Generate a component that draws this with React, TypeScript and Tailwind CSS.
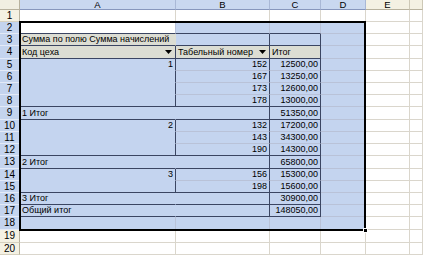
import React from "react";

type Cell = { t?: string; right?: boolean; arrow?: boolean };

// pivot table contents, columns A..C, by sheet row
const pivot: Record<number, Cell[]> = {
  3: [{ t: "Сумма по полю Сумма начислений" }, {}, {}],
  4: [{ t: "Код цеха", arrow: true }, { t: "Табельный номер", arrow: true }, { t: "Итог" }],
  5: [{ t: "1", right: true }, { t: "152", right: true }, { t: "12500,00", right: true }],
  6: [{}, { t: "167", right: true }, { t: "13250,00", right: true }],
  7: [{}, { t: "173", right: true }, { t: "12600,00", right: true }],
  8: [{}, { t: "178", right: true }, { t: "13000,00", right: true }],
  9: [{ t: "1 Итог" }, {}, { t: "51350,00", right: true }],
  10: [{ t: "2", right: true }, { t: "132", right: true }, { t: "17200,00", right: true }],
  11: [{}, { t: "143", right: true }, { t: "34300,00", right: true }],
  12: [{}, { t: "190", right: true }, { t: "14300,00", right: true }],
  13: [{ t: "2 Итог" }, {}, { t: "65800,00", right: true }],
  14: [{ t: "3", right: true }, { t: "156", right: true }, { t: "15300,00", right: true }],
  15: [{}, { t: "198", right: true }, { t: "15600,00", right: true }],
  16: [{ t: "3 Итог" }, {}, { t: "30900,00", right: true }],
  17: [{ t: "Общий итог" }, {}, { t: "148050,00", right: true }],
};

const darkRows = [2, 3, 4, 8, 9, 12, 13, 15, 16, 17];
const groupInner = [5, 6, 7, 10, 11, 14];
const aLine = [4, 5, 6, 7, 8, 10, 11, 12, 14, 15];
const aSpan = [3, 9, 13, 16, 17];

const isSel = (r: number, c: number) => r >= 2 && r <= 18 && c <= 4;

function cellBg(r: number, c: number) {
  if (!isSel(r, c)) return "bg-white";
  if (r === 2 && c === 1) return "bg-white";
  if ((r === 3 && c === 1) || (r === 4 && c <= 3)) return "bg-[#dcddd3]";
  return "bg-[#c4d4ef]";
}

function cellBottom(r: number, c: number) {
  if (c <= 3 && darkRows.includes(r)) return "border-b-[#3b4562]";
  if (c === 1 && groupInner.includes(r)) return "border-b-transparent";
  if (isSel(r, c)) return "border-b-[#b9c2d8]";
  return "border-b-[#dad6cc]";
}

function cellRight(r: number, c: number) {
  if (c === 1 && aLine.includes(r)) return "border-r-[#3b4562]";
  if (c === 1 && aSpan.includes(r)) return "border-r-transparent";
  if ((c === 2 || c === 3) && r >= 3 && r <= 17) return "border-r-[#3b4562]";
  if (isSel(r, c)) return "border-r-[#b9c2d8]";
  return "border-r-[#dad6cc]";
}

function Arrow() {
  return (
    <svg width="7" height="4" viewBox="0 0 7 4" className="ml-auto mr-[1px] shrink-0">
      <path d="M0 0h7L3.5 4z" fill="#000" />
    </svg>
  );
}

const colLetters = ["A", "B", "C", "D", "E", ""];

export default function App() {
  const rows = Array.from({ length: 20 }, (_, i) => i + 1);
  return (
    <div className="relative w-[423px] h-[255px] overflow-hidden bg-white text-black font-['Liberation_Sans',Arial,sans-serif]">
      <div className="grid grid-cols-[20px_156px_94px_51px_45px_44px_13px] grid-rows-[10px_12px_12px_12px_13px_12px_12px_12px_12px_13px_12px_12px_12px_13px_12px_12px_12px_12px_13px_13px_12px]">
        {/* corner + column headers */}
        <div className="bg-[#f1efe2] border-r border-b border-[#b8b29e]" />
        {colLetters.map((l, i) => (
          <div
            key={l + i}
            className={`flex items-center justify-center text-[9.5px] leading-none border-r border-b ${
              i < 4 ? "bg-[#c9d8f0] border-r-[#a9b8d6] border-b-[#8797bd]" : "bg-[#f4f1e3] border-r-[#cdc8b6] border-b-[#b8b29e]"
            }`}
          >
            {l}
          </div>
        ))}

        {rows.map((r) => {
          const sel = r >= 2 && r <= 18;
          const data = pivot[r];
          return (
            <React.Fragment key={r}>
              <div
                className={`flex items-center justify-center text-[10px] leading-none border-r border-b ${
                  sel ? "bg-[#c4d4ee] border-r-[#8797bd] border-b-[#e3eaf7]" : "bg-[#f4f1e3] border-r-[#b8b29e] border-b-[#d6d1bf]"
                }`}
              >
                {r}
              </div>
              {[1, 2, 3, 4, 5, 6].map((c) => {
                const cell = data && c <= 3 ? data[c - 1] : undefined;
                return (
                  <div
                    key={c}
                    className={`flex items-center min-w-0 whitespace-nowrap text-[9px] leading-none border-r border-b px-[2px] ${cellBg(r, c)} ${cellBottom(r, c)} ${cellRight(r, c)} ${
                      cell?.right ? "justify-end" : "justify-start"
                    }`}
                  >
                    {cell?.t && <span>{cell.t}</span>}
                    {cell?.arrow && <Arrow />}
                  </div>
                );
              })}
            </React.Fragment>
          );
        })}
      </div>

      {/* selection frame and fill handle */}
      <div className="absolute left-[19px] top-[21px] w-[347px] h-[210px] border-2 border-black pointer-events-none" />
      <div className="absolute left-[363px] top-[228px] w-[5px] h-[5px] bg-black border border-white" />
    </div>
  );
}
